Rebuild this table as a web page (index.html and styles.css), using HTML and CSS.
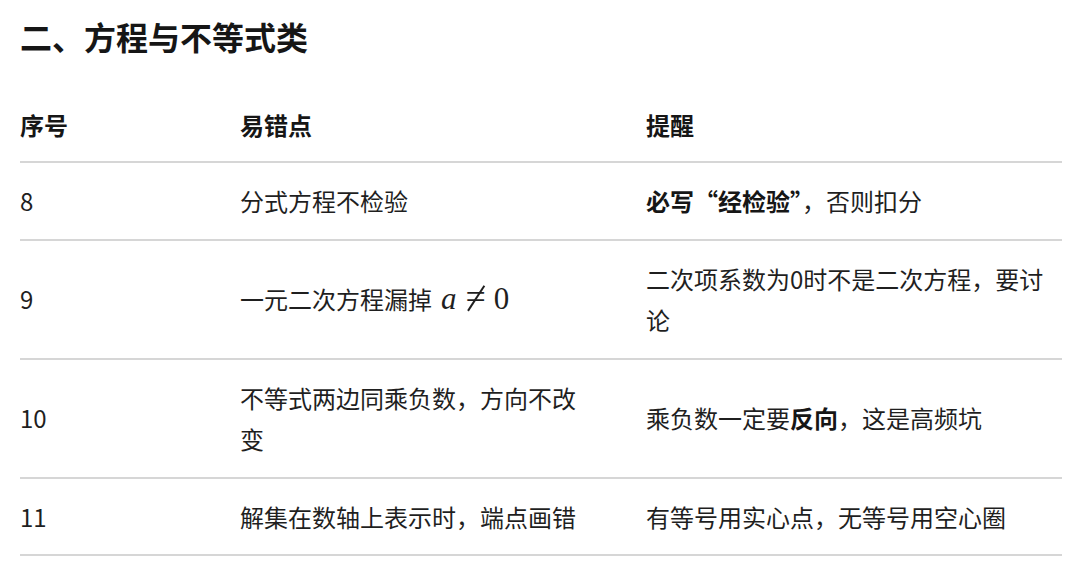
FILE: index.html
```html
<!DOCTYPE html>
<html lang="zh-CN">
<head>
<meta charset="utf-8">
<title>二、方程与不等式类</title>
<link rel="stylesheet" href="styles.css">
</head>
<body>
<main class="page">
  <h2 class="title">二、方程与不等式类</h2>
  <table class="tbl">
    <colgroup>
      <col class="c1"><col class="c2"><col class="c3">
    </colgroup>
    <thead>
      <tr><th>序号</th><th>易错点</th><th>提醒</th></tr>
    </thead>
    <tbody>
      <tr><td>8</td><td>分式方程不检验</td><td><b>必写“经检验”</b>，否则扣分</td></tr>
      <tr><td>9</td><td>一元二次方程漏掉<span class="math"><i>a</i><span class="rel" aria-label="≠">=</span>0</span></td><td>二次项系数为0时不是二次方程，要讨论</td></tr>
      <tr><td>10</td><td>不等式两边同乘负数，方向不改变</td><td>乘负数一定要<b>反向</b>，这是高频坑</td></tr>
      <tr><td>11</td><td>解集在数轴上表示时，端点画错</td><td>有等号用实心点，无等号用空心圈</td></tr>
    </tbody>
  </table>
</main>
</body>
</html>
```
FILE: styles.css
```css
html, body {
  margin: 0;
  padding: 0;
  background: #ffffff;
}
.page {
  padding: 0 18px 0 20px;
  font-family: "Noto Sans CJK SC", "Noto Sans", sans-serif;
  color: #1f1f1f;
}
.title {
  margin: 0;
  padding-top: 15px;
  font-size: 32px;
  line-height: 42px;
  font-weight: 700;
  color: #161616;
}
.tbl {
  margin-top: 33px;
  width: 1042px;
  border-collapse: collapse;
  table-layout: fixed;
  font-size: 24px;
  line-height: 41px;
}
.c1 { width: 220px; }
.c2 { width: 406px; }
.c3 { width: 416px; }
.tbl th, .tbl td {
  text-align: left;
  vertical-align: middle;
  border-bottom: 2px solid #d6d6d6;
  padding: 17px 0 17px 0;
}
.tbl td { line-height: 41.5px; }
.tbl th {
  font-weight: 700;
  padding-top: 14px;
  padding-bottom: 16px;
  color: #161616;
}
.tbl th:nth-child(2), .tbl td:nth-child(2) { padding-right: 56px; }
.tbl th:nth-child(3), .tbl td:nth-child(3) { padding-right: 4px; }
.tbl b { font-weight: 700; color: #161616; }
.math {
  font-family: "Liberation Serif", "DejaVu Serif", serif;
  font-size: 31px;
  line-height: 30px;
  margin-left: 9px;
}
.math i { font-style: italic; }
.rel {
  position: relative;
  display: inline-block;
  font-size: 36px;
  line-height: 30px;
  margin: 0 8px 0 9px;
}
.rel::after {
  content: "";
  position: absolute;
  left: 50%;
  top: 50%;
  width: 1.6px;
  height: 30px;
  background: #1f1f1f;
  transform: translate(-50%, -46%) rotate(33deg);
}
```
